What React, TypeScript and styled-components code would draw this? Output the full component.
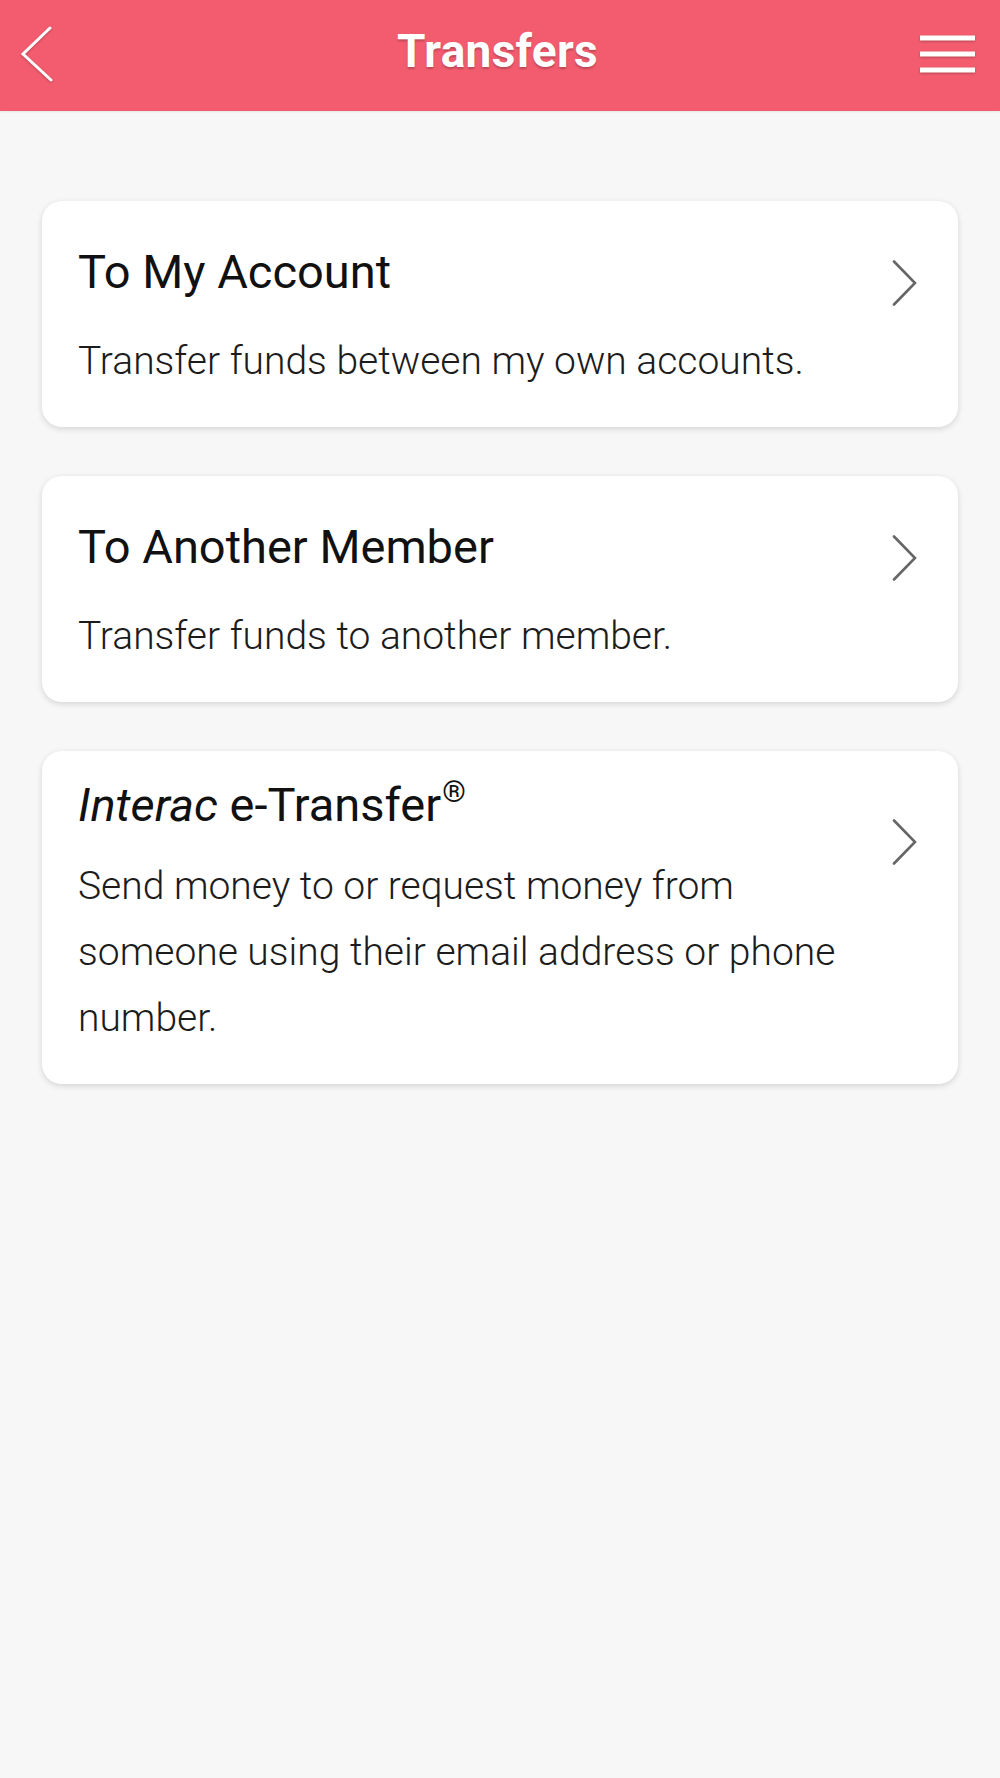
import React from "react";
import styled, { createGlobalStyle } from "styled-components";

const GlobalStyle = createGlobalStyle`
  html, body {
    margin: 0;
    padding: 0;
    background: #f7f7f7;
  }
  body {
    font-family: Roboto, "Noto Sans", "Liberation Sans", sans-serif;
    -webkit-font-smoothing: antialiased;
  }
  * { box-sizing: border-box; }
`;

const Screen = styled.div`
  min-height: 1778px;
  background: #f7f7f7;
  display: flex;
  flex-direction: column;
`;

const Header = styled.header`
  height: 111px;
  background: #f25c6e;
  display: grid;
  grid-template-columns: 1fr auto 1fr;
  align-items: center;
  padding: 0 25px 4px 20px;
  box-shadow: 0 1px 2px rgba(0, 0, 0, 0.08);
`;

const IconButton = styled.button<{ $align: "start" | "end" }>`
  background: none;
  border: none;
  padding: 0;
  margin: 0;
  display: flex;
  justify-self: ${(p) => p.$align};
  cursor: pointer;
  filter: drop-shadow(0 1px 1px rgba(0, 0, 0, 0.25));
`;

const Title = styled.h1`
  margin: -3px 0 0 0;
  font-family: Roboto, "Liberation Sans", sans-serif;
  font-weight: 700;
  font-size: 46px;
  line-height: 1.17;
  color: #ffffff;
  text-shadow: 0 2px 2px rgba(0, 0, 0, 0.22);
  letter-spacing: 0.3px;
`;

const List = styled.main`
  display: flex;
  flex-direction: column;
  gap: 49px;
  padding: 90px 42px 0;
`;

const Card = styled.a<{ $top: number; $chevronTop: number }>`
  display: flex;
  align-items: flex-start;
  background: #ffffff;
  border-radius: 20px;
  box-shadow: 0 2px 6px rgba(0, 0, 0, 0.14);
  padding: ${(p) => p.$top}px 40px 33px 36px;
  text-decoration: none;
  color: inherit;
  cursor: pointer;

  & > svg {
    flex: none;
    margin-top: ${(p) => p.$chevronTop}px;
  }
`;

const CardBody = styled.div<{ $gap: number }>`
  flex: 1;
  display: flex;
  flex-direction: column;
  gap: ${(p) => p.$gap}px;
`;

const CardTitle = styled.div`
  font-size: 47px;
  line-height: 56px;
  font-weight: 400;
  color: #111111;

  em {
    font-style: italic;
  }

  sup {
    font-size: 30px;
    line-height: 0;
    vertical-align: 0;
    position: relative;
    top: -19px;
    margin-left: 1px;
  }
`;

const CardText = styled.p`
  margin: 0;
  font-size: 39px;
  line-height: 66px;
  font-weight: 300;
  color: #1c1c1c;
  max-width: 785px;
`;

const BackIcon = () => (
  <svg width="34" height="56" viewBox="0 0 34 56" fill="none">
    <polyline
      points="30,2 3,28 31,54"
      stroke="#ffffff"
      strokeWidth="3"
      strokeLinecap="round"
      strokeLinejoin="miter"
    />
  </svg>
);

const MenuIcon = () => (
  <svg width="55" height="40" viewBox="0 0 55 40" fill="#ffffff">
    <rect x="0" y="1.5" width="55" height="5" />
    <rect x="0" y="17.5" width="55" height="5" />
    <rect x="0" y="33.5" width="55" height="5" />
  </svg>
);

const Chevron = () => (
  <svg width="26" height="46" viewBox="0 0 26 46" fill="none">
    <polyline
      points="2,1.5 23,23 2,44.5"
      stroke="#666666"
      strokeWidth="2.6"
      strokeLinecap="round"
      strokeLinejoin="miter"
    />
  </svg>
);

type Item = {
  key: string;
  title: React.ReactNode;
  text: string;
  top: number;
  gap: number;
  chevronTop: number;
};

const items: Item[] = [
  {
    key: "own",
    title: "To My Account",
    text: "Transfer funds between my own accounts.",
    top: 43,
    gap: 28,
    chevronTop: 16,
  },
  {
    key: "member",
    title: "To Another Member",
    text: "Transfer funds to another member.",
    top: 43,
    gap: 28,
    chevronTop: 16,
  },
  {
    key: "interac",
    title: (
      <>
        <em>Interac</em> e-Transfer<sup>®</sup>
      </>
    ),
    text: "Send money to or request money from someone using their email address or phone number.",
    top: 26,
    gap: 20,
    chevronTop: 42,
  },
];

export default function App() {
  return (
    <>
      <GlobalStyle />
      <Screen>
        <Header>
          <IconButton $align="start" aria-label="Back">
            <BackIcon />
          </IconButton>
          <Title>Transfers</Title>
          <IconButton $align="end" aria-label="Menu">
            <MenuIcon />
          </IconButton>
        </Header>
        <List>
          {items.map((it) => (
            <Card key={it.key} $top={it.top} $chevronTop={it.chevronTop}>
              <CardBody $gap={it.gap}>
                <CardTitle>{it.title}</CardTitle>
                <CardText>{it.text}</CardText>
              </CardBody>
              <Chevron />
            </Card>
          ))}
        </List>
      </Screen>
    </>
  );
}
